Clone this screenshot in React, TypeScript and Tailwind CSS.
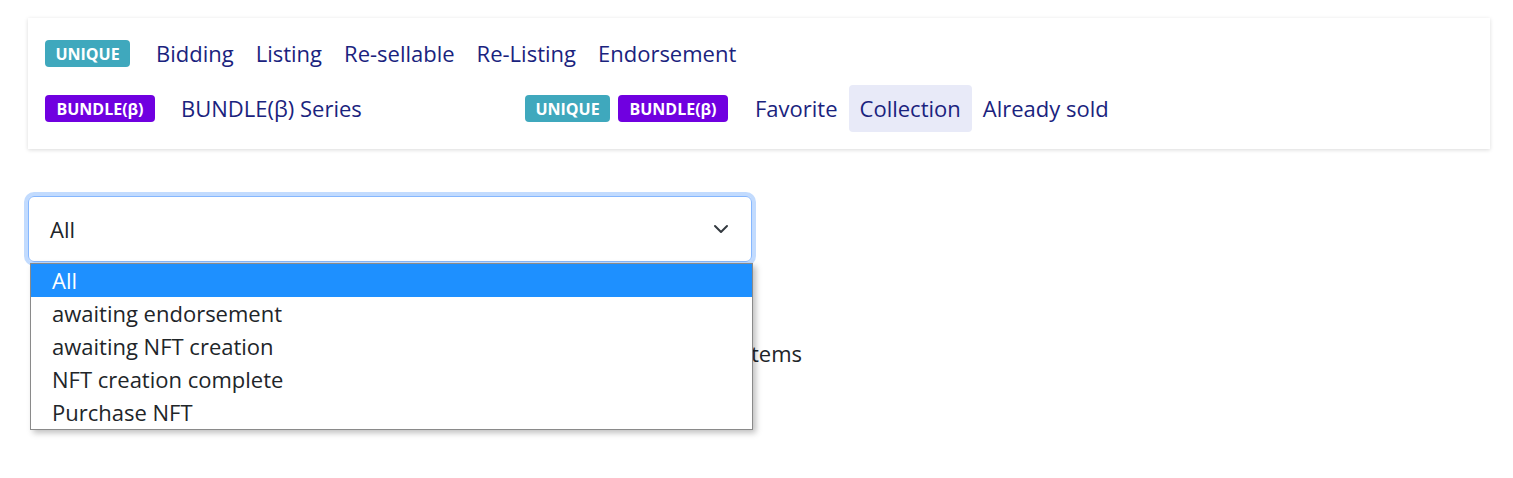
import React from 'react';

const font = { fontFamily: '"Open Sans", "Noto Sans", sans-serif' };

const Badge: React.FC<{ kind: 'unique' | 'bundle' }> = ({ kind }) => (
  <span
    className={`inline-flex items-center justify-center h-[27px] rounded-[4px] text-white font-bold text-[16px] leading-none ${
      kind === 'unique' ? 'bg-[#3fa8bd] w-[85px]' : 'bg-[#7000e0] w-[110px]'
    }`}
  >
    {kind === 'unique' ? 'UNIQUE' : 'BUNDLE(β)'}
  </span>
);

const NavItem: React.FC<{ label: string; active?: boolean }> = ({ label, active }) => (
  <span
    className={`px-[11px] h-[47px] flex items-center rounded-[4px] text-[22px] text-[#1a237e] ${
      active ? 'bg-[#e8eaf8]' : ''
    }`}
  >
    {label}
  </span>
);

const options = ['All', 'awaiting endorsement', 'awaiting NFT creation', 'NFT creation complete', 'Purchase NFT'];

export default function App() {
  return (
    <div className="bg-white min-h-[478px] pt-[18px] px-[28px]" style={font}>
      {/* Filter card */}
      <div className="w-[1462px] bg-white shadow-[0_1px_4px_rgba(0,0,0,0.15)] pl-[17px] pt-[12px] pb-[17px]">
        <div className="flex items-center">
          <Badge kind="unique" />
          <div className="flex ml-[15px]">
            {['Bidding', 'Listing', 'Re-sellable', 'Re-Listing', 'Endorsement'].map(l => (
              <NavItem key={l} label={l} />
            ))}
          </div>
        </div>
        <div className="flex items-center mt-[8px]">
          <div className="flex items-center w-[480px]">
            <Badge kind="bundle" />
            <span className="ml-[26px] text-[22px] text-[#1a237e]">BUNDLE(β) Series</span>
          </div>
          <div className="flex items-center gap-[8px]">
            <Badge kind="unique" />
            <Badge kind="bundle" />
          </div>
          <div className="flex ml-[16px]">
            <NavItem label="Favorite" />
            <NavItem label="Collection" active />
            <NavItem label="Already sold" />
          </div>
        </div>
      </div>

      {/* Status select */}
      <div className="relative mt-[47px] w-[724px]">
        <div className="h-[66px] flex items-center justify-between rounded-[6px] border border-[#86b7fe] shadow-[0_0_0_4px_rgba(13,110,253,0.25)] pl-[21px] pr-[22px] text-[22px] text-[#212529]">
          <span>All</span>
          <svg width="16" height="16" viewBox="0 0 16 16" fill="none">
            <path d="M2 5l6 6 6-6" stroke="#343a40" strokeWidth="2" strokeLinecap="round" strokeLinejoin="round" />
          </svg>
        </div>

        <div className="mt-[75px] flex justify-end w-[774px] text-[22px] text-[#212529]">0 items</div>

        {/* Native dropdown popup */}
        <div className="absolute left-[2px] top-[67px] w-[723px] bg-white border border-[#8a8a8a] shadow-[3px_3px_6px_rgba(0,0,0,0.25)]">
          {options.map((o, i) => (
            <div
              key={o}
              className={`h-[33px] flex items-center pl-[21px] text-[22px] ${
                i === 0 ? 'bg-[#1e90ff] text-white' : 'text-[#212529]'
              }`}
            >
              {o}
            </div>
          ))}
        </div>
      </div>
    </div>
  );
}
